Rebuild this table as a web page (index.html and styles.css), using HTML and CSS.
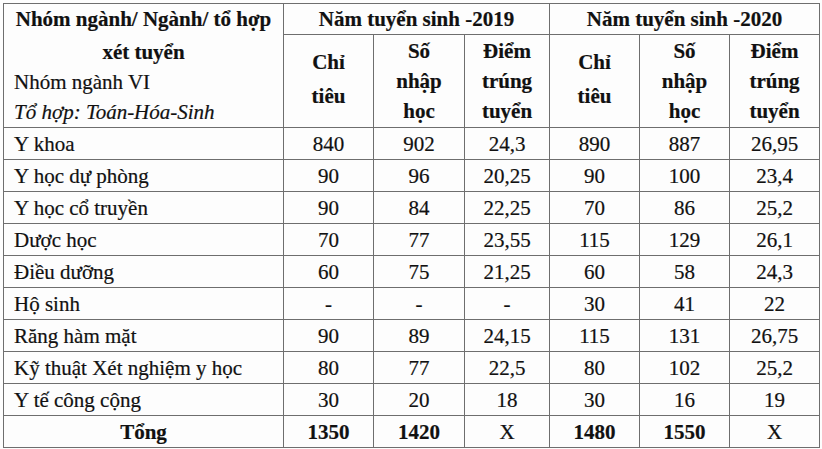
FILE: index.html
```
<!DOCTYPE html>
<html>
<head>
<meta charset="utf-8">
<title>Nhóm ngành VI</title>
<link rel="stylesheet" href="styles.css">
</head>
<body>
<table class="tbl">
  <colgroup>
    <col class="c-name"><col class="c1"><col class="c2"><col class="c3"><col class="c4"><col class="c5"><col class="c6">
  </colgroup>
  <thead>
    <tr class="h1">
      <th rowspan="2" class="head-name">
        <div class="hn-title">Nhóm ngành/ Ngành/ tổ hợp</div>
        <div class="hn-title hn-second">xét tuyển</div>
        <div class="hn-group">Nhóm ngành VI</div>
        <div class="hn-combo">Tổ hợp: Toán-Hóa-Sinh</div>
      </th>
      <th colspan="3">Năm tuyển sinh -2019</th>
      <th colspan="3">Năm tuyển sinh -2020</th>
    </tr>
    <tr class="h2">
      <th><div class="two">Chỉ<br>tiêu</div></th>
      <th>Số<br>nhập<br>học</th>
      <th>Điểm<br>trúng<br>tuyển</th>
      <th><div class="two">Chỉ<br>tiêu</div></th>
      <th>Số<br>nhập<br>học</th>
      <th>Điểm<br>trúng<br>tuyển</th>
    </tr>
  </thead>
  <tbody>
    <tr><td class="name">Y khoa</td><td>840</td><td>902</td><td>24,3</td><td>890</td><td>887</td><td>26,95</td></tr>
    <tr><td class="name">Y học dự phòng</td><td>90</td><td>96</td><td>20,25</td><td>90</td><td>100</td><td>23,4</td></tr>
    <tr><td class="name">Y học cổ truyền</td><td>90</td><td>84</td><td>22,25</td><td>70</td><td>86</td><td>25,2</td></tr>
    <tr><td class="name">Dược học</td><td>70</td><td>77</td><td>23,55</td><td>115</td><td>129</td><td>26,1</td></tr>
    <tr><td class="name">Điều dưỡng</td><td>60</td><td>75</td><td>21,25</td><td>60</td><td>58</td><td>24,3</td></tr>
    <tr><td class="name">Hộ sinh</td><td>-</td><td>-</td><td>-</td><td>30</td><td>41</td><td>22</td></tr>
    <tr><td class="name">Răng hàm mặt</td><td>90</td><td>89</td><td>24,15</td><td>115</td><td>131</td><td>26,75</td></tr>
    <tr><td class="name">Kỹ thuật Xét nghiệm y học</td><td>80</td><td>77</td><td>22,5</td><td>80</td><td>102</td><td>25,2</td></tr>
    <tr><td class="name">Y tế công cộng</td><td>30</td><td>20</td><td>18</td><td>30</td><td>16</td><td>19</td></tr>
    <tr class="total"><td class="total-name">Tổng</td><td class="b">1350</td><td class="b">1420</td><td>X</td><td class="b">1480</td><td class="b">1550</td><td>X</td></tr>
  </tbody>
</table>
</body>
</html>
```

FILE: styles.css
```
html, body {
  margin: 0;
  padding: 0;
  background: #fdfdfd;
}
body {
  padding: 3px 0 0 3px;
  font-family: "Liberation Serif", "Times New Roman", serif;
  font-size: 21px;
  color: #111111;
}
.tbl {
  border-collapse: collapse;
  table-layout: fixed;
  width: 816px;
  font-family: "Liberation Serif", "Times New Roman", serif;
}
.c-name { width: 280px; }
.c1 { width: 90px; }
.c2 { width: 91px; }
.c3 { width: 85px; }
.c4 { width: 90px; }
.c5 { width: 90px; }
.c6 { width: 90px; }
.tbl th, .tbl td {
  border: 1px solid #6e6e6e;
  padding: 0;
  text-align: center;
  vertical-align: middle;
  line-height: 30px;
  font-family: "Liberation Serif", "Times New Roman", serif;
  -webkit-text-stroke: 0.2px #111111;
}
.tbl th {
  font-weight: bold;
}
.h1 { height: 30px; }
.h2 { height: 93px; }
.two { margin-top: -4px; line-height: 34px; }
.head-name {
  vertical-align: top !important;
}
.hn-title {
  font-weight: bold;
  text-align: center;
}
.hn-second { margin-top: 3px; }
.hn-group, .hn-combo {
  font-weight: normal;
  text-align: left;
  padding-left: 10px;
}
.hn-combo { font-style: italic; }
.tbl tbody tr { height: 32px; }
.tbl td { line-height: 28px; }
.tbl td.name {
  text-align: left;
  padding-left: 10px;
}
.total-name, .b { font-weight: bold; }
```
